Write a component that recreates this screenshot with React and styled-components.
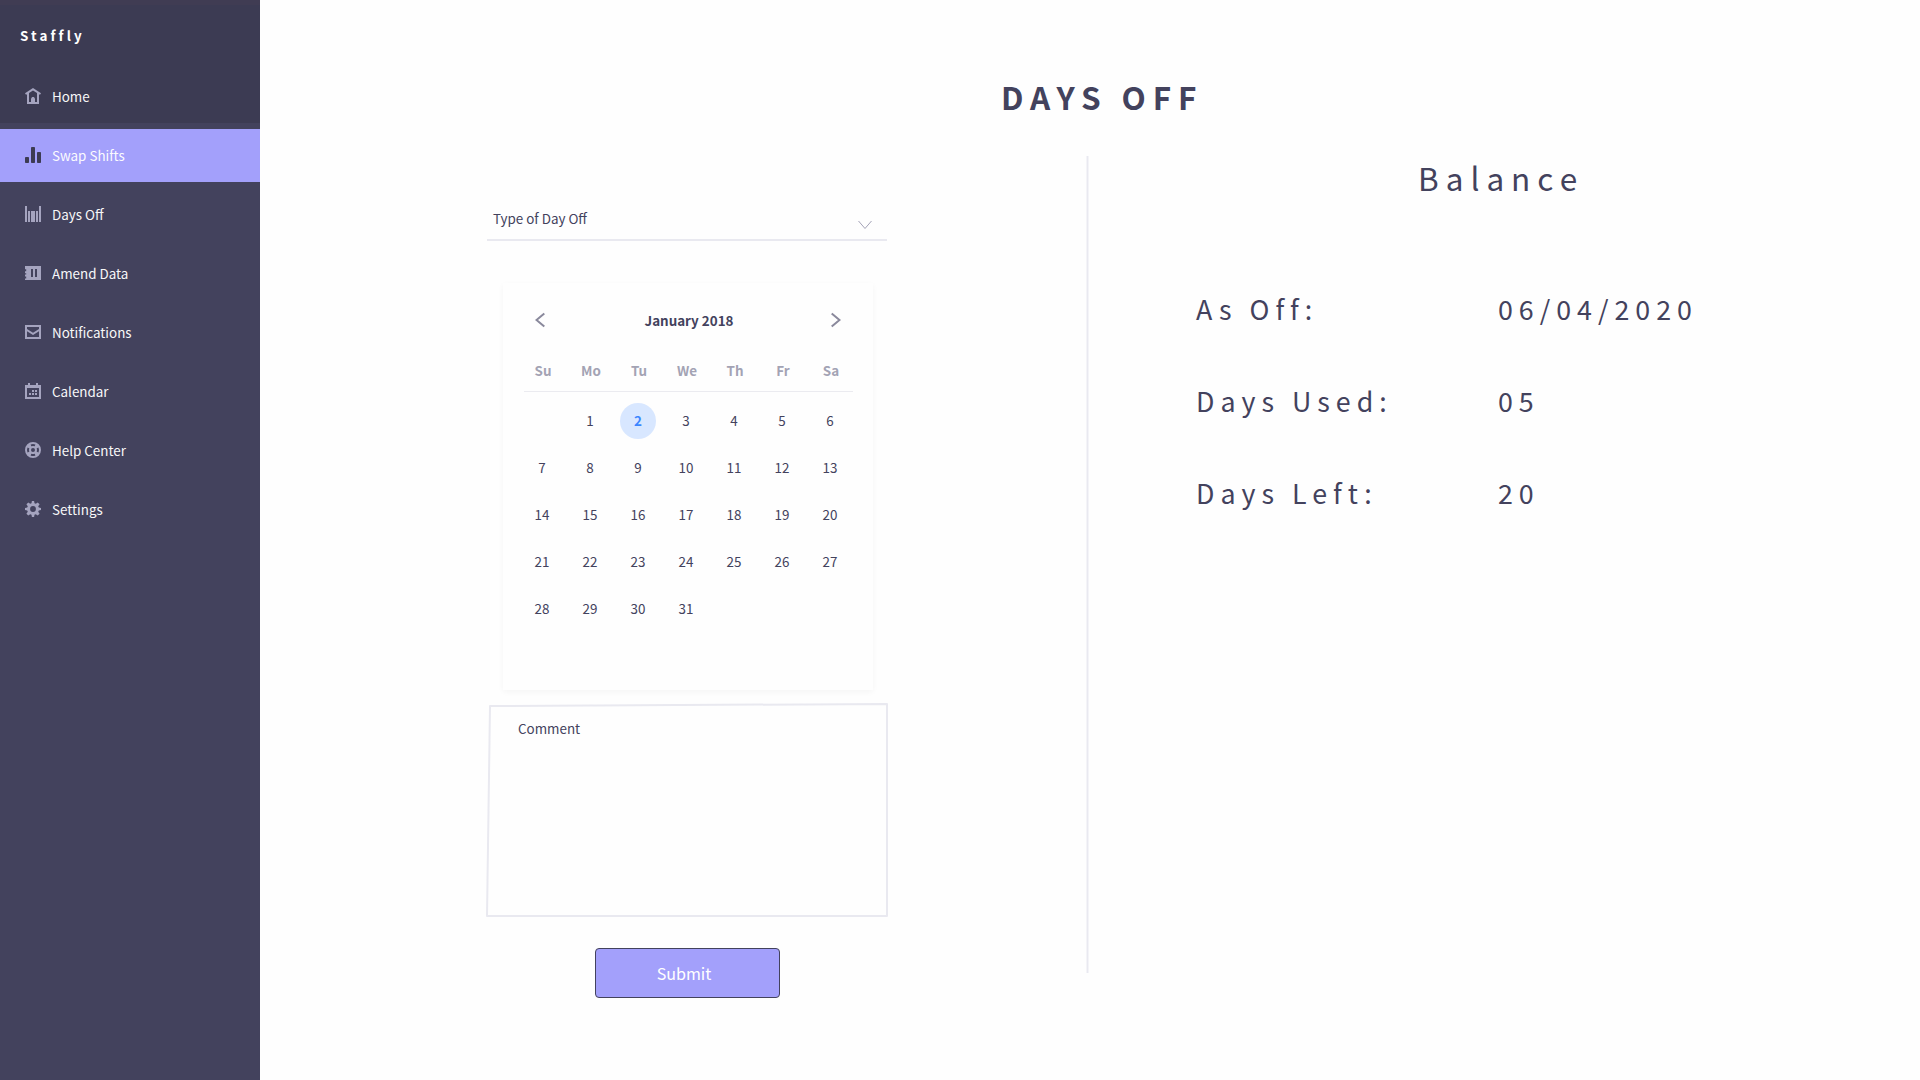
import React from "react";
import styled, { createGlobalStyle } from "styled-components";

const GlobalStyle = createGlobalStyle`
  * { box-sizing: border-box; }
  body {
    margin: 0;
    background: #fefefe;
    color: #43425d;
    font-family: "Noto Sans CJK SC", "Noto Sans", sans-serif;
    font-size: 13.4px;
    line-height: 20px;
  }
`;

const Page = styled.div`
  display: flex;
  width: 1920px;
  height: 1080px;
  overflow: hidden;
`;

const Sidebar = styled.aside`
  flex: none;
  width: 260px;
  background: linear-gradient(#403c53 0 5px, #3c3b53 5px 123px, #43425d 123px);
`;

const Brand = styled.div`
  height: 70px;
  padding: 25px 0 0 20px;
  color: #fff;
  font-weight: 700;
  letter-spacing: 3.1px;
`;

const NavItem = styled.a`
  display: flex;
  align-items: center;
  gap: 11px;
  height: 53px;
  margin-bottom: 6px;
  padding: 0 0 1px 25px;
  background: ${(p) => (p.$active ? "#a3a0fb" : "transparent")};

  svg {
    flex: none;
    display: block;
    fill: ${(p) => (p.$active ? "#3c3b53" : "#a5a4bf")};
  }
`;

const NavLabel = styled.span`
  color: #fff;
  opacity: 0.96;
`;

const Main = styled.main`
  flex: 1;
`;

const Title = styled.h1`
  margin: 76px 0 40px 741px;
  font-size: 31.5px;
  line-height: 40px;
  font-weight: 700;
  letter-spacing: 6.9px;
`;

const Columns = styled.div`
  display: flex;
`;

const FormColumn = styled.section`
  width: 826px;
  padding: 52px 0 0 226px;
`;

const Divider = styled.div`
  width: 3px;
  height: 817px;
  background: #e9e9f0;
  border: solid #f4f4f8;
  border-width: 0 1px;
`;

const Select = styled.div`
  display: flex;
  justify-content: space-between;
  width: 400px;
  height: 33px;
  margin-left: 1px;
  padding: 0 14px 0 6px;
  border-bottom: 2px solid #e9e9f0;

  svg { margin-top: 12px; }
`;

const Card = styled.div`
  width: 370px;
  height: 407px;
  margin: 42px 0 0 17px;
  padding: 27px 20px 0 21px;
  background: #fefefe;
  box-shadow: 0 2px 6px rgba(0, 0, 0, 0.04);
`;

const CardHeader = styled.div`
  display: flex;
  justify-content: space-between;
  padding: 0 12px 0 11px;
  font-weight: 700;

  svg { margin-top: 2px; }
`;

const Month = styled.span`
  padding-left: 2px;
`;

const Weekdays = styled.div`
  display: grid;
  grid-template-columns: repeat(7, 48px);
  width: 329px;
  margin-top: 30px;
  padding-bottom: 11px;
  border-bottom: 1px solid #ebebf0;
  color: #a3a3b4;
  font-weight: 700;
  text-align: center;

  span { margin-left: -10px; }
`;

const Days = styled.div`
  display: grid;
  grid-template-columns: repeat(7, 36px);
  grid-auto-rows: 36px;
  gap: 11px 12px;
  margin-top: 11px;
`;

const Day = styled.span`
  grid-column-start: ${(p) => p.$column || "auto"};
  border-radius: 50%;
  line-height: 34px;
  text-align: center;
  color: ${(p) => (p.$selected ? "#3b86ff" : "inherit")};
  background: ${(p) => (p.$selected ? "#d8e7ff" : "none")};
  font-weight: ${(p) => (p.$selected ? 700 : 400)};
`;

const CommentBox = styled.div`
  position: relative;
  width: 402px;
  height: 214px;
  margin-top: 13px;
  padding: 15px 32px;

  svg {
    position: absolute;
    inset: 0;
  }
`;

const Submit = styled.button`
  display: block;
  width: 185px;
  height: 50px;
  margin: 31px 0 0 109px;
  padding: 0 7px 0 0;
  border: 1px solid #43425d;
  border-radius: 4px;
  background: #a3a0fb;
  color: #fff;
  font: inherit;
  font-size: 16.1px;
`;

const Balance = styled.section`
  padding-left: 107px;
`;

const BalanceTitle = styled.h2`
  margin: 1px 0 0 222px;
  font-size: 31.5px;
  line-height: 40px;
  font-weight: 400;
  letter-spacing: 7px;
`;

const BalanceRow = styled.div`
  display: grid;
  grid-template-columns: 302px auto;
  margin-top: ${(p) => (p.$first ? 92 : 52)}px;
  font-size: 26.8px;
  line-height: 40px;
  letter-spacing: 6px;
  white-space: nowrap;
`;

const icons = {
  home: (
    <>
      <path fillRule="evenodd" d="M8 0 L16 5.2 L15 6.8 L14 6.2 V16 H2 V6.2 L1 6.8 L0 5.2 Z M4 5 V14 H12 V5 L8 2.4 Z" />
      <path d="M6 14V10.5L7.2 9h1.6L10 10.5V14z" />
    </>
  ),
  bars: (
    <>
      <rect x="0" y="10" width="4" height="6" rx="0.8" />
      <rect x="6" y="0" width="4" height="16" rx="0.8" />
      <rect x="12" y="5" width="4" height="11" rx="0.8" />
    </>
  ),
  columns: <path d="M0 0h2v16H0z M3 5h2v11H3z M6 5h4v11H6z M11 5h2v11h-2z M14 0h2v16h-2z" />,
  notebook: (
    <path fillRule="evenodd" d="M0 1h16v14H0v-1.5h1.2v-2H0v-2h1.2V8.3H0v-2h1.2v-2H0z M6 4v8h2V4z M10 4v8h2V4z" />
  ),
  mail: <path fillRule="evenodd" d="M0 1h16v14H0z M2 3v2l6 3.8L14 5V3z M2 7.2V13h12V7.2L8 11z" />,
  calendar: (
    <path fillRule="evenodd" d="M3 0h2v2h6V0h2v2h3v14H0V2h3z M2 5v9h12V5z M7 7h2v2H7z M10 7h2v2h-2z M4 10h2v2H4z M7 10h2v2H7z M10 10h2v2h-2z" />
  ),
  help: (
    <path fillRule="evenodd" d="M8 0a8 8 0 1 1 0 16A8 8 0 0 1 8 0z M8 6a2 2 0 1 0 0 4a2 2 0 0 0 0-4z M5.6 2.5L6.3 4.3Q8 3.7 9.7 4.3L10.4 2.5Q8 1.5 5.6 2.5z M5.6 13.5L6.3 11.7Q8 12.3 9.7 11.7L10.4 13.5Q8 14.5 5.6 13.5z M2.5 5.6L4.3 6.3Q3.7 8 4.3 9.7L2.5 10.4Q1.5 8 2.5 5.6z M13.5 5.6L11.7 6.3Q12.3 8 11.7 9.7L13.5 10.4Q14.5 8 13.5 5.6z" />
  ),
  gear: (
    <path fillRule="evenodd" d="M6.9 0h2.2l.4 2.2 1.3.6 1.9-1.4 1.9 1.9-1.4 1.9.6 1.3 2.2.4v2.2l-2.2.4-.6 1.3 1.4 1.9-1.9 1.9-1.9-1.4-1.3.6-.4 2.2H6.9l-.4-2.2-1.3-.6-1.9 1.4-1.9-1.9 1.4-1.9-.6-1.3L0 9.1V6.9l2.2-.4.6-1.3-1.4-1.9 1.9-1.9 1.9 1.4 1.3-.6z M8 5.1a2.9 2.9 0 1 0 0 5.8a2.9 2.9 0 0 0 0-5.8z" />
  ),
};

const navItems = [
  ["Home", "home"],
  ["Swap Shifts", "bars"],
  ["Days Off", "columns"],
  ["Amend Data", "notebook"],
  ["Notifications", "mail"],
  ["Calendar", "calendar"],
  ["Help Center", "help"],
  ["Settings", "gear"],
];

const balances = [
  ["As Off:", "06/04/2020"],
  ["Days Used:", "05"],
  ["Days Left:", "20"],
];

const weekdays = ["Su", "Mo", "Tu", "We", "Th", "Fr", "Sa"];
const monthDays = Array.from({ length: 31 }, (_, i) => i + 1);

export default function App() {
  return (
    <Page>
      <GlobalStyle />
      <Sidebar>
        <Brand>Staffly</Brand>
        <nav>
          {navItems.map(([label, icon]) => (
            <NavItem key={label} $active={label === "Swap Shifts"}>
              <svg width="16" height="16" viewBox="0 0 16 16">{icons[icon]}</svg>
              <NavLabel>{label}</NavLabel>
            </NavItem>
          ))}
        </nav>
      </Sidebar>
      <Main>
        <Title>DAYS OFF</Title>
        <Columns>
          <FormColumn>
            <Select>
              <span>Type of Day Off</span>
              <svg width="15" height="10" viewBox="0 0 15 10" fill="none" stroke="#a4a3b7">
                <path d="M0.5 1 L7 8.5 L13.5 1" />
              </svg>
            </Select>
            <Card>
              <CardHeader>
                <svg width="10" height="16" viewBox="0 0 10 16" fill="none" stroke="#8a899c" strokeWidth="2">
                  <path d="M9.3 1.4 L1.5 8 L9.3 14.6" />
                </svg>
                <Month>January 2018</Month>
                <svg width="10" height="16" viewBox="0 0 10 16" fill="none" stroke="#8a899c" strokeWidth="2">
                  <path d="M0.7 1.4 L8.5 8 L0.7 14.6" />
                </svg>
              </CardHeader>
              <Weekdays>
                {weekdays.map((d) => <span key={d}>{d}</span>)}
              </Weekdays>
              <Days>
                {monthDays.map((d) => (
                  <Day key={d} $column={d === 1 ? 2 : undefined} $selected={d === 2}>{d}</Day>
                ))}
              </Days>
            </Card>
            <CommentBox>
              <svg width="402" height="214" viewBox="0 0 402 214" fill="none" stroke="#e9e9f0" strokeWidth="2" strokeLinejoin="round">
                <path d="M4 3 L401 1 V213 H1 Z" />
              </svg>
              Comment
            </CommentBox>
            <Submit>Submit</Submit>
          </FormColumn>
          <Divider />
          <Balance>
            <BalanceTitle>Balance</BalanceTitle>
            {balances.map(([label, value], i) => (
              <BalanceRow key={label} $first={i === 0}>
                <span>{label}</span>
                <span>{value}</span>
              </BalanceRow>
            ))}
          </Balance>
        </Columns>
      </Main>
    </Page>
  );
}
